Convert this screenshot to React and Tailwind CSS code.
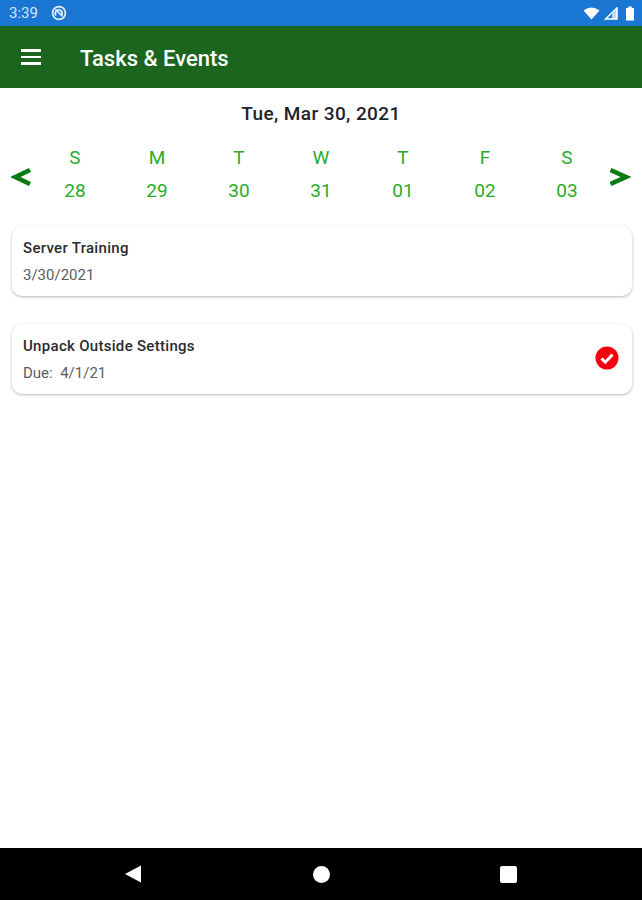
const roboto = { fontFamily: 'Roboto, "Liberation Sans", sans-serif' };

const days = [
  ["S", "28"], ["M", "29"], ["T", "30"], ["W", "31"], ["T", "01"], ["F", "02"], ["S", "03"],
];

function ChevronLeft() {
  return (
    <svg width="20" height="20" viewBox="0 0 20 20" className="shrink-0 mt-[6px]">
      <path d="M19 3 L4.5 10 L19 17" fill="none" stroke="#0b7a12" strokeWidth="4.6" />
    </svg>
  );
}

function ChevronRight() {
  return (
    <svg width="22" height="20" viewBox="0 0 22 20" className="shrink-0 mt-[6px]">
      <path d="M0.5 3 L16 10 L0.5 17" fill="none" stroke="#0b7a12" strokeWidth="4.6" />
    </svg>
  );
}

function Card({ title, sub, check }) {
  return (
    <div className="ml-[12px] mr-[10px] h-[70px] rounded-[10px] bg-white shadow-[0_1px_3px_rgba(0,0,0,0.28)] flex items-center justify-between pl-[11px] pr-[13px]">
      <div className="flex flex-col">
        <div className="text-[15px] leading-[20px] font-medium text-[#2a2c2f] tracking-[0.3px]">{title}</div>
        <div className="mt-[7px] text-[15px] leading-[20px] text-[#5a5d61] whitespace-pre">{sub}</div>
      </div>
      {check && (
        <svg width="24" height="24" viewBox="0 0 24 24" className="-mt-[2px]">
          <circle cx="12" cy="12" r="11.5" fill="#f5000f" />
          <path d="M6.5 12.5 L10.3 16.2 L17.5 8.6" fill="none" stroke="#fff" strokeWidth="3" />
        </svg>
      )}
    </div>
  );
}

export default function App() {
  return (
    <div className="w-[642px] h-[900px] flex flex-col bg-white overflow-hidden" style={roboto}>
      <div className="h-[26px] bg-[#1976d2] flex items-center justify-between pl-[9px] pr-[7px] text-[#d6e6f8]">
        <div className="flex items-center gap-[13px]">
          <span className="text-[15px] leading-none">3:39</span>
          <svg width="16" height="16" viewBox="0 0 16 16" fill="none" stroke="#e3eefa" strokeWidth="1.7">
            <circle cx="8" cy="8" r="6.4" />
            <path d="M5 10.5 A3.4 3.4 0 1 1 10.8 9.8 M4.5 4.5 L11.5 11.5" />
          </svg>
        </div>
        <div className="flex items-center gap-[3px]">
          <svg width="17" height="13" viewBox="0 0 17 13"><path d="M0.5 3.5 Q8.5 -2.5 16.5 3.5 L8.5 12.5 Z" fill="#fff" /></svg>
          <svg width="14" height="13" viewBox="0 0 14 13" className="ml-[1px]">
            <path d="M13 1 L13 12 L1.5 12 Z" fill="none" stroke="#fff" strokeWidth="1.5" />
            <path d="M8 12 L8 7 L13 2 L13 12 Z" fill="#fff" opacity="0.75" />
          </svg>
          <svg width="10" height="15" viewBox="0 0 10 15" className="ml-[4px]">
            <path d="M3.2 0.5 H6.8 V2 H9 V14.5 H1 V2 H3.2 Z" fill="#fff" />
          </svg>
        </div>
      </div>

      <div className="h-[62px] bg-[#1b651f] flex items-center pl-[21px] text-white">
        <div className="w-[20px] flex flex-col gap-[4px]">
          <div className="h-[2.5px] bg-white" />
          <div className="h-[2.5px] bg-white" />
          <div className="h-[2.5px] bg-white" />
        </div>
        <div className="ml-[39px] mt-[3px] text-[22px] leading-none font-medium">Tasks &amp; Events</div>
      </div>

      <div className="flex-1 flex flex-col">
        <div className="pt-[14px] text-center text-[19px] leading-[24px] font-medium text-[#212326] tracking-[0.4px]">
          Tue, Mar 30, 2021
        </div>
        <div className="mt-[15px] flex items-center pl-[11px] pr-[10px]">
          <ChevronLeft />
          <div className="flex-1 grid grid-cols-7 pl-[3px] pr-[2px]">
            {days.map(([d, n], i) => (
              <div key={i} className="flex flex-col items-center text-[#2aac2a] text-[19px] leading-[33px]">
                <span>{d}</span>
                <span>{n}</span>
              </div>
            ))}
          </div>
          <ChevronRight />
        </div>
        <div className="mt-[19px] flex flex-col gap-[28px]">
          <Card title="Server Training" sub="3/30/2021" />
          <Card title="Unpack Outside Settings" sub="Due:  4/1/21" check />
        </div>
      </div>

      <div className="h-[52px] bg-black flex items-center justify-between pl-[124px] pr-[125px]">
        <svg width="18" height="18" viewBox="0 0 18 18"><path d="M17 0.5 V17.5 L1 9 Z" fill="#fff" /></svg>
        <div className="w-[17px] h-[17px] rounded-full bg-white" />
        <div className="w-[17px] h-[17px] rounded-[2px] bg-white" />
      </div>
    </div>
  );
}
